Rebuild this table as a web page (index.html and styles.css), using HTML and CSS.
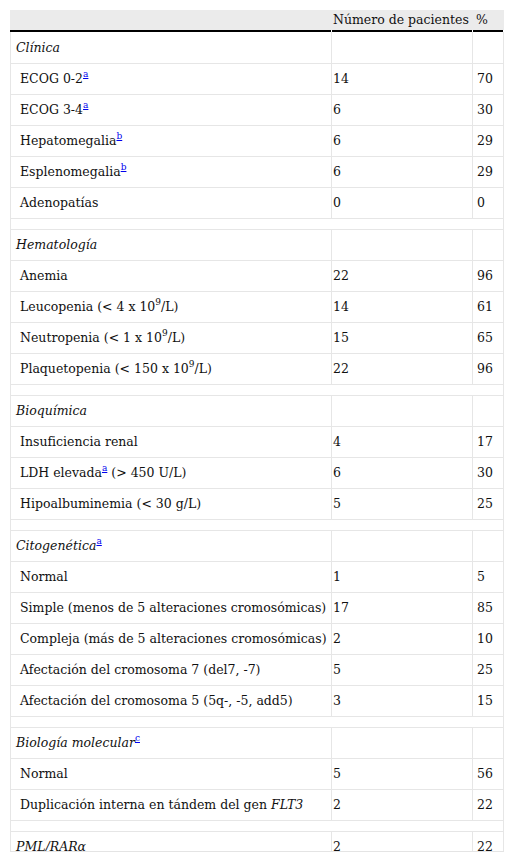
FILE: index.html
```html
<!DOCTYPE html>
<html lang="es">
<head>
<meta charset="utf-8">
<title>Tabla</title>
<link rel="stylesheet" href="styles.css">
</head>
<body>
<div class="frame">
<table class="data">
  <thead>
    <tr><th class="c1"></th><th class="c2">Número de pacientes</th><th class="c3">%</th></tr>
  </thead>
  <tbody>
    <tr class="first"><td class="sec">Clínica</td><td></td><td></td></tr>
    <tr><td class="ind">ECOG 0-2<sup><a href="#">a</a></sup></td><td>14</td><td>70</td></tr>
    <tr><td class="ind">ECOG 3-4<sup><a href="#">a</a></sup></td><td>6</td><td>30</td></tr>
    <tr><td class="ind">Hepatomegalia<sup><a href="#">b</a></sup></td><td>6</td><td>29</td></tr>
    <tr><td class="ind">Esplenomegalia<sup><a href="#">b</a></sup></td><td>6</td><td>29</td></tr>
    <tr><td class="ind">Adenopatías</td><td>0</td><td>0</td></tr>
    <tr class="gap"><td colspan="3"></td></tr>
    <tr><td class="sec">Hematología</td><td></td><td></td></tr>
    <tr><td class="ind">Anemia</td><td>22</td><td>96</td></tr>
    <tr><td class="ind">Leucopenia (&lt; 4 x 10<sup>9</sup>/L)</td><td>14</td><td>61</td></tr>
    <tr><td class="ind">Neutropenia (&lt; 1 x 10<sup>9</sup>/L)</td><td>15</td><td>65</td></tr>
    <tr><td class="ind">Plaquetopenia (&lt; 150 x 10<sup>9</sup>/L)</td><td>22</td><td>96</td></tr>
    <tr class="gap"><td colspan="3"></td></tr>
    <tr><td class="sec">Bioquímica</td><td></td><td></td></tr>
    <tr><td class="ind">Insuficiencia renal</td><td>4</td><td>17</td></tr>
    <tr><td class="ind">LDH elevada<sup><a href="#">a</a></sup> (&gt; 450 U/L)</td><td>6</td><td>30</td></tr>
    <tr><td class="ind">Hipoalbuminemia (&lt; 30 g/L)</td><td>5</td><td>25</td></tr>
    <tr class="gap"><td colspan="3"></td></tr>
    <tr><td class="sec">Citogenética<sup><a href="#">a</a></sup></td><td></td><td></td></tr>
    <tr><td class="ind">Normal</td><td>1</td><td>5</td></tr>
    <tr><td class="ind">Simple (menos de 5 alteraciones cromosómicas)</td><td>17</td><td>85</td></tr>
    <tr><td class="ind">Compleja (más de 5 alteraciones cromosómicas)</td><td>2</td><td>10</td></tr>
    <tr><td class="ind">Afectación del cromosoma 7 (del7, -7)</td><td>5</td><td>25</td></tr>
    <tr><td class="ind">Afectación del cromosoma 5 (5q-, -5, add5)</td><td>3</td><td>15</td></tr>
    <tr class="gap"><td colspan="3"></td></tr>
    <tr><td class="sec">Biología molecular<sup><a href="#">c</a></sup></td><td></td><td></td></tr>
    <tr><td class="ind">Normal</td><td>5</td><td>56</td></tr>
    <tr><td class="ind">Duplicación interna en tándem del gen <i>FLT3</i></td><td>2</td><td>22</td></tr>
    <tr class="gap"><td colspan="3"></td></tr>
    <tr><td class="sec">PML/RARα</td><td>2</td><td>22</td></tr>
  </tbody>
</table>
</div>
</body>
</html>
```
FILE: styles.css
```css
html, body {
  margin: 0;
  padding: 0;
  background: #fff;
}

body {
  font-family: "DejaVu Serif", serif;
  font-size: 12.5px;
  color: #111;
}

.frame {
  margin: 10px 10px 0 10px;
  height: 841px;
  overflow: hidden;
  border-bottom: 1px solid #e4e4e4;
}

.data {
  width: 494px;
  border-collapse: separate;
  border-spacing: 0;
  table-layout: fixed;
  font-family: "DejaVu Serif", serif;
  font-size: 12.5px;
}

.data .c1 { width: 322px; }
.data .c2 { width: 140px; }

.data th {
  height: 20px;
  padding: 0 0 2px 0;
  font-weight: normal;
  text-align: left;
  line-height: 16px;
  vertical-align: middle;
  white-space: nowrap;
  background:
    linear-gradient(#000, #000) 0 100% / calc(100% - 1px) 2px no-repeat,
    linear-gradient(#fff, #fff) 100% 100% / 1px 2px no-repeat,
    #ebebeb;
}

.data th.c2 { padding-left: 1px; }
.data th.c3 { padding-left: 3px; }

.data td {
  height: 30px;
  padding: 0;
  line-height: 16px;
  vertical-align: middle;
  border-right: 1px solid #e6e6e6;
  border-bottom: 1px solid #e6e6e6;
  white-space: nowrap;
}

.data td:first-child {
  border-left: 1px solid #e6e6e6;
  padding-left: 5px;
}

.data td:nth-child(2) { padding-left: 1px; }
.data td:nth-child(3) { padding-left: 4px; }

.data tr.first td { height: 31px; }

.data td.sec { font-style: italic; }
.data td.ind { padding-left: 9px; }

.data tr.gap td {
  height: 10px;
  padding: 0;
}

.data sup {
  font-size: 9px;
  line-height: 0;
  vertical-align: 6px;
  font-style: normal;
}

.data sup a {
  color: #0000ee;
  text-decoration: underline;
}
```
